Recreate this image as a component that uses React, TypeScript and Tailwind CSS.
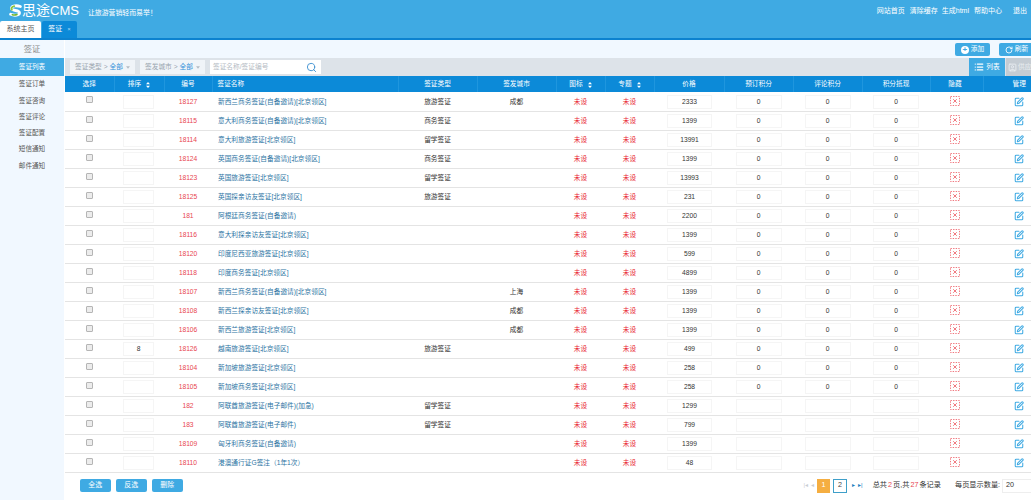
import { List, RotateCw, Search, SquarePen, SquareUser } from "lucide-react"

const rows = [
  { id: "18127", name: "新西兰商务签证(自备邀请)[北京领区]", type: "旅游签证", city: "成都", price: "2333" },
  { id: "18115", name: "意大利商务签证(自备邀请)[北京领区]", type: "商务签证", city: "", price: "1399" },
  { id: "18114", name: "意大利旅游签证[北京领区]", type: "留学签证", city: "", price: "13991" },
  { id: "18124", name: "英国商务签证(自备邀请)[北京领区]", type: "商务签证", city: "", price: "1399" },
  { id: "18123", name: "英国旅游签证[北京领区]", type: "留学签证", city: "", price: "13993" },
  { id: "18125", name: "英国探亲访友签证[北京领区]", type: "旅游签证", city: "", price: "231" },
  { id: "181", name: "阿根廷商务签证(自备邀请)", type: "", city: "", price: "2200" },
  { id: "18116", name: "意大利探亲访友签证[北京领区]", type: "", city: "", price: "1399" },
  { id: "18120", name: "印度尼西亚旅游签证[北京领区]", type: "", city: "", price: "599" },
  { id: "18118", name: "印度商务签证[北京领区]", type: "", city: "", price: "4899" },
  { id: "18107", name: "新西兰商务签证(自备邀请)[北京领区]", type: "", city: "上海", price: "1399" },
  { id: "18108", name: "新西兰探亲访友签证[北京领区]", type: "", city: "成都", price: "1399" },
  { id: "18106", name: "新西兰旅游签证[北京领区]", type: "", city: "成都", price: "1399" },
  { id: "18126", name: "越南旅游签证[北京领区]", type: "旅游签证", city: "", price: "499", sort: "8" },
  { id: "18104", name: "新加坡旅游签证[北京领区]", type: "", city: "", price: "258" },
  { id: "18105", name: "新加坡商务签证[北京领区]", type: "", city: "", price: "258" },
  { id: "182", name: "阿联酋旅游签证(电子邮件)(加急)", type: "留学签证", city: "", price: "1299", blank: true },
  { id: "183", name: "阿联酋旅游签证(电子邮件)", type: "留学签证", city: "", price: "799", blank: true },
  { id: "18109", name: "匈牙利商务签证(自备邀请)", type: "", city: "", price: "1399", blank: true },
  { id: "18110", name: "港澳通行证G签注（1年1次）", type: "", city: "", price: "48", blank: true },
]

const sideItems = ["签证订单", "签证咨询", "签证评论", "签证配置", "短信通知", "邮件通知"]

function SortArrows() {
  return (
    <svg viewBox="0 0 6 9" className="ml-[5px] inline-block h-[6px] w-[4px] fill-white">
      <path d="M3 0l3 3.5H0zM3 9L0 5.5h6z" />
    </svg>
  )
}

function HiddenIcon() {
  return (
    <svg viewBox="0 0 10 10" className="mx-auto h-[10px] w-[10px] fill-none stroke-[#ee6a72]" strokeWidth={0.9}>
      <rect x="0.5" y="0.5" width="9" height="9" strokeDasharray="1.4 1.2" />
      <path d="M3.2 3.2l3.600 3.600M6.800 3.200l-3.600 3.600" />
    </svg>
  )
}

function Logo() {
  return (
    <svg viewBox="0 0 12 12" className="h-[13px] w-[13px] fill-none" strokeLinecap="round">
      <path d="M10.500 2.300C7 1 2.300 1.500 2.300 4c0 2.500 7.400 1.500 7.400 4 0 2.500-4.700 3-8.200 1.500" stroke="#fff" strokeWidth={2.600} />
      <path d="M2.600 5.200C1.800 3.800 2.800 2.400 4.800 2" stroke="#8cc63f" strokeWidth={1.800} />
      <path d="M3 9.900c1.600.4 3.200.3 4.400-.2" stroke="#6fb52c" strokeWidth={1.400} />
    </svg>
  )
}

function Pill({ label }: { label: string }) {
  return (
    <div className="flex h-[14px] w-[65px] items-center justify-center bg-[#f0f4f8] text-[6.700px] text-[#9aa5af]">
      {label} &gt; <span className="ml-[2px] text-[#2f8fd8]">全部</span>
      <svg viewBox="0 0 6 4" className="ml-[3px] h-[3px] w-[4px] fill-[#b5bdc5]">
        <path d="M0 0h6L3 4z" />
      </svg>
    </div>
  )
}

export default function App() {
  return (
    <div className="h-[500px] w-[1031px] overflow-hidden bg-white font-['Liberation_Sans','Noto_Sans_CJK_SC',sans-serif] text-[6.700px] text-[#333]">
      {/* top bar */}
      <header className="h-[40px] border-b-2 border-[#0c82cf] bg-[#3faae3]">
        <div className="flex h-[21px] items-start justify-between pl-[9px] pr-[4px]">
          <div className="flex items-center pt-[2px] text-white">
            <Logo />
            <span className="text-[14px] leading-[17px]">思途</span>
            <span className="text-[13px] font-light leading-[17px]">CMS</span>
            <span className="ml-[9px] mt-[5px] text-[6.900px]">让旅游营销轻而易举！</span>
          </div>
          <nav className="flex pt-[6px] text-[7px] leading-[9px] text-white">
            <span>网站首页</span>
            <span className="ml-[5px]">清除缓存</span>
            <span className="ml-[4px]">生成html</span>
            <span className="ml-[5px]">帮助中心</span>
            <span className="ml-[11px]">退出</span>
          </nav>
        </div>
        <div className="flex h-[17px] items-stretch">
          <div className="flex w-[41px] items-center justify-center rounded-t-[2px] bg-white text-[7px] text-[#555]">系统主页</div>
          <div className="ml-px flex w-[35px] items-center justify-center gap-[5px] rounded-t-[2px] bg-[#0c8ad8] text-[7px] text-white">
            签证 <span className="text-[6px] text-[#a8d8f5]">×</span>
          </div>
        </div>
      </header>

      <div className="flex h-[460px]">
        {/* sidebar */}
        <aside className="w-[64px] shrink-0 bg-[#f1f8ff] text-center text-[6.600px] text-[#555]">
          <div className="flex h-[18px] items-center justify-center text-[8.300px] text-[#888]">签证</div>
          <div className="flex h-[18px] items-center justify-center bg-[#3faae3] text-white">签证列表</div>
          {sideItems.map((item) => (
            <div key={item} className="flex h-[16.300px] items-center justify-center">
              {item}
            </div>
          ))}
        </aside>

        <main className="w-[967px] shrink-0 overflow-hidden pl-px">
          {/* toolbar */}
          <div className="flex h-[18px] w-[1000px] items-center gap-[9px] bg-[#f1f8ff] pl-[890px] pt-px">
            <button className="flex h-[13px] w-[35px] items-center justify-center gap-[2px] rounded-[2px] bg-[#3faae3] text-[6.700px] text-white">
              <span className="flex h-[8px] w-[8px] items-center justify-center rounded-full bg-white text-[8px] font-bold leading-none text-[#3faae3]">+</span>
              添加
            </button>
            <button className="flex h-[13px] w-[35px] items-center justify-center gap-[2px] rounded-[2px] bg-[#3faae3] text-[6.700px] text-white">
              <RotateCw className="h-[8px] w-[8px]" strokeWidth={2.500} />
              刷新
            </button>
          </div>

          {/* filters */}
          <div className="flex h-[18px] w-[1000px] items-center bg-[#dde3e9] pl-[5px]">
            <Pill label="签证类型" />
            <div className="ml-[5px]">
              <Pill label="签发城市" />
            </div>
            <div className="ml-[5px] flex h-[14px] w-[111px] items-center justify-between bg-white pl-[3px] pr-[4px] text-[#b5bcc4]">
              <span>签证名称/签证编号</span>
              <Search className="h-[11px] w-[11px] text-[#3b8fd0]" strokeWidth={2} />
            </div>
            <button className="ml-[648px] flex h-[18px] w-[36px] items-center justify-center gap-[2px] bg-[#3faae3] text-[6.700px] text-white">
              <List className="h-[10px] w-[10px]" strokeWidth={3} />
              列表
            </button>
            <button className="ml-px flex h-[18px] w-[35px] items-center gap-px bg-[#c5ccd3] pl-[2px] text-[6.700px] text-[#e8ecf0]">
              <SquareUser className="h-[9px] w-[9px]" strokeWidth={2.500} />
              供应
            </button>
          </div>

          {/* list */}
          <table className="w-[990px] table-fixed">
            <colgroup>
              <col className="w-[49px]" />
              <col className="w-[50px]" />
              <col className="w-[48px]" />
              <col className="w-[186px]" />
              <col className="w-[79px]" />
              <col className="w-[79px]" />
              <col className="w-[49px]" />
              <col className="w-[49px]" />
              <col className="w-[70px]" />
              <col className="w-[69px]" />
              <col className="w-[69px]" />
              <col className="w-[68px]" />
              <col className="w-[53px]" />
              <col className="w-[72px]" />
            </colgroup>
            <thead>
              <tr className="h-[16px] bg-[#0c8ad8] text-center text-[6.700px] text-white">
                <th className="pt-px font-normal">选择</th>
                <th className="border-l border-[#1f96de] pt-px font-normal">排序<SortArrows /></th>
                <th className="border-l border-[#1f96de] pt-px font-normal">编号</th>
                <th className="border-l border-[#1f96de] pl-[5px] pt-px text-left font-normal">签证名称</th>
                <th className="border-l border-[#1f96de] pt-px font-normal">签证类型</th>
                <th className="border-l border-[#1f96de] pt-px font-normal">签发城市</th>
                <th className="border-l border-[#1f96de] pt-px font-normal">图标<SortArrows /></th>
                <th className="border-l border-[#1f96de] pt-px font-normal">专题<SortArrows /></th>
                <th className="border-l border-[#1f96de] pt-px font-normal">价格</th>
                <th className="border-l border-[#1f96de] pt-px font-normal">预订积分</th>
                <th className="border-l border-[#1f96de] pt-px font-normal">评论积分</th>
                <th className="border-l border-[#1f96de] pt-px font-normal">积分抵现</th>
                <th className="border-l border-[#1f96de] pr-[3px] pt-px font-normal">隐藏</th>
                <th className="border-l border-[#1f96de] pt-px font-normal">管理</th>
              </tr>
            </thead>
            <tbody>
              {rows.map((row) => (
                <tr key={row.id} className="h-[19px] border-b border-[#e4e4e4] text-center">
                  <td>
                    <span className="mx-auto mb-[3px] block h-[7px] w-[7px] rounded-[1px] border border-[#b5b5b5] bg-[#ececec]" />
                  </td>
                  <td className="pt-px">
                    <div className="ml-[9px] flex h-[14px] w-[31px] items-center justify-center border border-[#f5f5f5]">{row.sort}</div>
                  </td>
                  <td className="pt-[2px] text-[#e8454f]">{row.id}</td>
                  <td className="pl-[6px] pt-[2px] text-left text-[#2c74a3]">{row.name}</td>
                  <td className="pt-[2px]">{row.type}</td>
                  <td className="pt-[2px]">{row.city}</td>
                  <td className="pt-[2px] text-[#e8222e]">未设</td>
                  <td className="pt-[2px] text-[#e8222e]">未设</td>
                  <td className="pt-px">
                    <div className="ml-[13px] flex h-[14px] w-[45px] items-center justify-center border border-[#f5f5f5]">{row.price}</div>
                  </td>
                  {[0, 1, 2].map((n) => (
                    <td key={n} className="pt-px">
                      <div className="mx-auto flex h-[14px] w-[46px] items-center justify-center border border-[#f5f5f5]">{row.blank ? "" : "0"}</div>
                    </td>
                  ))}
                  <td className="pb-px pr-[3px]">
                    <HiddenIcon />
                  </td>
                  <td className="pt-px">
                    <SquarePen className="mx-auto h-[10px] w-[10px] text-[#3faae3]" strokeWidth={2.500} />
                  </td>
                </tr>
              ))}
            </tbody>
          </table>

          {/* footer */}
          <div className="flex h-[27px] w-[1000px] items-center pb-px pl-[15px] text-[7.200px]">
            <div className="flex gap-[5.500px]">
              {["全选", "反选", "删除"].map((label) => (
                <button key={label} className="h-[13px] w-[30.500px] rounded-[2px] bg-[#3faae3] text-[6.900px] text-white">
                  {label}
                </button>
              ))}
            </div>
            <div className="ml-[621px] flex items-center text-[#c9ced3]">
              <span className="text-[6px]">|◂</span>
              <span className="ml-[3px] text-[6px]">◂</span>
            </div>
            <span className="ml-[3px] flex h-[14px] w-[13px] items-center justify-center bg-[#f5ae41] text-white">1</span>
            <span className="ml-[3px] flex h-[14px] w-[14px] items-center justify-center border border-[#3f9fc9] text-[#444]">2</span>
            <div className="ml-[5px] flex items-center text-[#1d7fc0]">
              <span className="text-[6px]">▸</span>
              <span className="ml-[3px] text-[6px]">▸|</span>
            </div>
            <span className="ml-[10px] whitespace-nowrap">
              总共<span className="px-px text-[#e8454f]">2</span>页,共<span className="px-px text-[#e8454f]">27</span>条记录
            </span>
            <span className="ml-[14px] whitespace-nowrap">每页显示数量:</span>
            <div className="ml-[2px] flex h-[14px] w-[40px] shrink-0 items-center border border-[#eee] pl-[3px]">20</div>
          </div>
        </main>
      </div>
    </div>
  )
}
